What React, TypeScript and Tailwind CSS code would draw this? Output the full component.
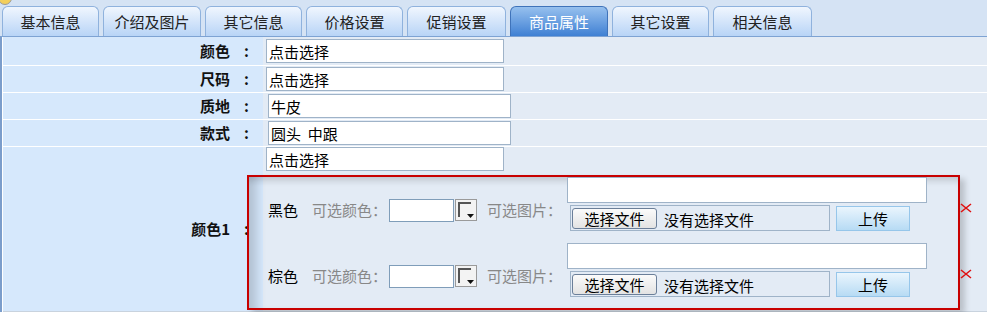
const tabs = [
  { label: "基本信息", w: "w-[97px]" },
  { label: "介绍及图片", w: "w-[98px]" },
  { label: "其它信息", w: "w-[97px]" },
  { label: "价格设置", w: "w-[97px]" },
  { label: "促销设置", w: "w-[99px]" },
  { label: "商品属性", w: "w-[98px]", active: true },
  { label: "其它设置", w: "w-[97px]" },
  { label: "相关信息", w: "w-[99px]" },
]

const attrs = [
  { label: "颜色", value: "点击选择", h: "h-[28px]", wide: false },
  { label: "尺码", value: "点击选择", h: "h-[26px]", wide: false },
  { label: "质地", value: "牛皮", h: "h-[26px]", wide: true },
  { label: "款式", value: "圆头  中跟", h: "h-[26px]", wide: true },
]

const Label = ({ text }: { text: string }) => (
  <div className="w-[260px] shrink-0 bg-[#d6e8fc] flex items-center justify-end font-bold text-[15px] text-[#111]">
    <span>{text}</span>
    <span className="w-[33px] text-center">:</span>
  </div>
)

const ColorGroup = ({ name }: { name: string }) => (
  <div className="relative flex items-center h-[66px] pl-[19px]">
    <span className="text-[15px] text-black">{name}</span>
    <span className="ml-[14px] text-[15px] text-[#888]">可选颜色：</span>
    <div className="ml-[2px] w-[65px] h-[23px] bg-white border border-[#7f9db9]" />
    <div className="ml-px w-[22px] h-[22px] border border-[#9a9a9a] bg-[#f3f3f3] relative">
      <div className="absolute left-[2px] top-[2px] w-[13px] h-[15px] border-t-2 border-l-2 border-[#555]" />
      <svg className="absolute right-[2px] bottom-[2px]" width="7" height="4" viewBox="0 0 7 4">
        <path d="M0 0h7L3.5 4z" fill="#111" />
      </svg>
    </div>
    <span className="ml-[10px] text-[15px] text-[#888]">可选图片：</span>
    <div className="ml-[5px] self-start flex flex-col">
      <div className="w-[360px] h-[26px] bg-white border border-[#9fb3c8]" />
      <div className="flex items-center mt-[2px]">
        <div className="ml-[3px] w-[260px] h-[26px] border border-[#9fb3c8] flex items-center">
          <div className="ml-px w-[85px] h-[21px] rounded-[3px] border border-[#6b7f99] bg-gradient-to-b from-[#fbfbfb] to-[#e3e3e3] flex items-center justify-center text-[15px] leading-none">
            选择文件
          </div>
          <span className="ml-[7px] text-[15px] leading-none pt-[3px]">没有选择文件</span>
        </div>
        <div className="ml-[6px] w-[74px] h-[25px] border border-[#96c6ea] bg-gradient-to-b from-[#eaf5fd] to-[#b7dbf4] flex items-center justify-center text-[15px] leading-none">
          上传
        </div>
      </div>
    </div>
    <svg className="absolute right-[-14px] top-[26px]" width="12" height="10" viewBox="0 0 12 10">
      <path d="M1 1l10 8M11 1L1 9" stroke="#e01010" strokeWidth="1.6" />
    </svg>
  </div>
)

export default function App() {
  return (
    <div className="w-[987px] h-[312px] overflow-hidden bg-[#d5e3f4] font-['Noto_Sans_CJK_SC',sans-serif] text-black">
      <div className="h-[6px] overflow-hidden">
        <div className="-ml-[2px] -mt-[9px] w-[14px] h-[14px] rounded-full border border-[#9a9a9a] bg-[#f3cf5c]" />
      </div>
      <div className="flex items-end h-[31px] pl-[2px] gap-[4px] border-b border-[#7ea3d3]">
        {tabs.map((t) => (
          <div
            key={t.label}
            className={`${t.w} h-[30px] rounded-t-[6px] border border-b-0 flex items-center justify-center text-[15px] leading-none ${
              t.active
                ? "border-[#3f73ba] bg-gradient-to-b from-[#96c0ee] to-[#3f80d3] text-white"
                : "border-[#8fb2dd] bg-gradient-to-b from-[#f0f6fe] to-[#b8d4f6] text-[#222]"
            }`}
          >
            {t.label}
          </div>
        ))}
      </div>
      <div className="flex flex-col gap-px bg-white border-l-2 border-[#7b9dcb] pl-px h-[275px]">
        {attrs.map((a) => (
          <div key={a.label} className={`flex ${a.h}`}>
            <Label text={a.label} />
            <div className={`flex-1 bg-[#e3ebf5] flex items-center ${a.wide ? "pl-[5px]" : "pl-[3px]"}`}>
              <div
                className={`${a.wide ? "w-[243px]" : "w-[238px]"} h-[24px] bg-white border border-[#9fb3c8] flex items-center px-[2px] text-[15px] leading-none whitespace-pre`}
              >
                {a.value}
              </div>
            </div>
          </div>
        ))}
        <div className="flex flex-1 border-b border-[#c9d3de]">
          <Label text="颜色1" />
          <div className="flex-1 bg-[#e3ebf5] flex flex-col pl-[3px]">
            <div className="w-[238px] h-[24px] bg-white border border-[#9fb3c8] flex items-center px-[2px] text-[15px] leading-none">
              点击选择
            </div>
            <div className="mt-[4px] -ml-[19px] w-[713px] h-[135px] border-2 border-[#c80000] shadow-[inset_14px_0_10px_-6px_rgba(0,0,0,0.16),inset_0_8px_6px_-4px_rgba(0,0,0,0.14),5px_4px_6px_rgba(0,0,0,0.18)]">
              <ColorGroup name="黑色" />
              <ColorGroup name="棕色" />
            </div>
          </div>
        </div>
      </div>
    </div>
  )
}
